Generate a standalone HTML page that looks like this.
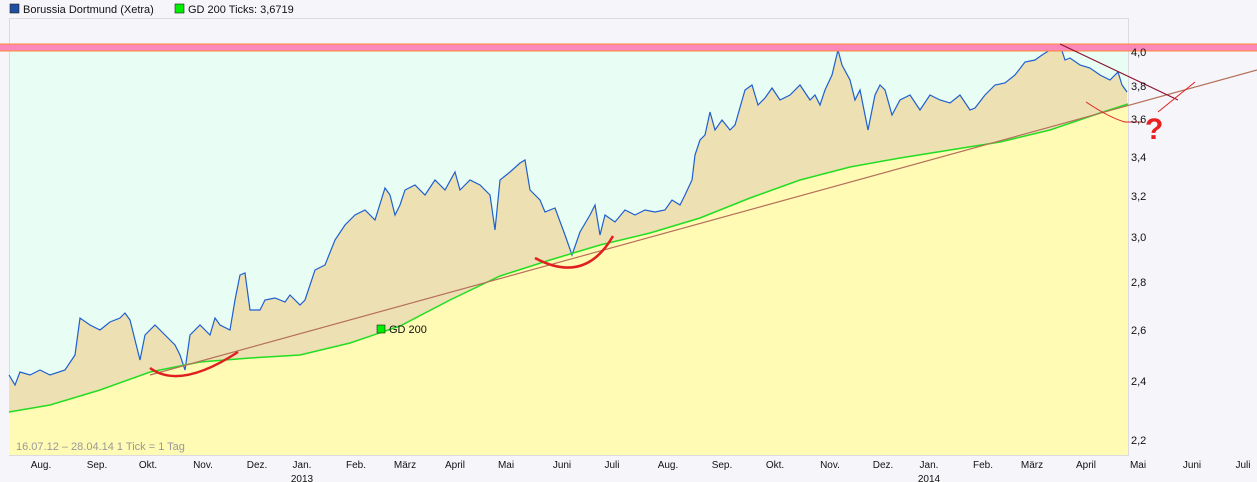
<!DOCTYPE html>
<html><head><meta charset="utf-8"><style>
html,body{margin:0;padding:0;background:#f6f6fa;width:1257px;height:482px;overflow:hidden}
svg{display:block;font-family:"Liberation Sans",sans-serif}
</style></head><body>
<svg width="1257" height="482" viewBox="0 0 1257 482" xmlns="http://www.w3.org/2000/svg">
<rect width="1257" height="482" fill="#f6f6fa"/>
<rect x="10" y="4" width="9" height="9" fill="#1f4fa0" stroke="#222" stroke-width="0.6"/>
<text x="23" y="13" font-size="11" fill="#111">Borussia Dortmund (Xetra)</text>
<rect x="175" y="4" width="9" height="9" fill="#00ee00" stroke="#222" stroke-width="0.6"/>
<text x="188" y="13" font-size="11" fill="#111">GD 200 Ticks: 3,6719</text>
<rect x="9.5" y="18.5" width="1119" height="437" fill="#f6f6fa" stroke="#dcdce0"/>
<rect x="10" y="51" width="1118" height="404" fill="#e8fdf4"/>
<polygon fill="#ede1b4" points="9,455 9,375 15,385 20,372 30,375 40,370 50,375 65,370 75,355 80,318 90,325 100,330 110,322 120,318 125,313 130,320 135,340 140,360 145,335 155,325 165,335 175,345 180,355 185,370 190,335 200,325 210,335 215,318 220,325 230,330 235,300 240,275 245,273 250,310 260,310 265,300 275,298 285,302 290,295 300,305 305,300 315,270 325,265 335,240 345,225 355,215 365,210 375,220 385,188 390,195 395,215 400,205 405,190 415,185 425,195 435,180 445,190 455,172 460,190 470,180 480,185 490,195 495,230 500,180 510,172 520,163 525,160 530,190 540,200 545,212 555,208 565,235 572,255 580,232 590,215 595,205 600,235 605,215 615,222 625,210 635,215 645,210 655,212 665,210 672,200 680,205 685,195 692,180 695,155 700,140 705,135 710,112 715,130 722,120 730,130 735,125 745,90 752,85 758,105 765,98 772,88 780,100 790,95 800,85 810,100 815,95 820,105 825,90 832,75 838,50 842,65 850,80 855,100 860,90 868,130 875,95 880,85 885,90 892,115 900,100 910,95 920,110 930,95 940,100 950,103 960,95 970,110 975,108 985,95 995,85 1005,83 1015,75 1025,62 1035,60 1042,55 1050,50 1060,45 1065,60 1070,58 1080,65 1090,68 1100,75 1110,80 1118,72 1122,85 1127,92 1128,455"/>
<polygon fill="#fffab4" points="9,455 9,412 50,405 100,390 150,372 200,362 250,358 300,355 350,343 400,326 450,300 500,276 550,260 600,245 650,233 700,218 750,198 800,180 850,167 900,158 950,150 1000,142 1050,130 1100,113 1128,104 1128,455"/>
<polyline fill="none" stroke="#1f5fcf" stroke-width="1.2" points="9,375 15,385 20,372 30,375 40,370 50,375 65,370 75,355 80,318 90,325 100,330 110,322 120,318 125,313 130,320 135,340 140,360 145,335 155,325 165,335 175,345 180,355 185,370 190,335 200,325 210,335 215,318 220,325 230,330 235,300 240,275 245,273 250,310 260,310 265,300 275,298 285,302 290,295 300,305 305,300 315,270 325,265 335,240 345,225 355,215 365,210 375,220 385,188 390,195 395,215 400,205 405,190 415,185 425,195 435,180 445,190 455,172 460,190 470,180 480,185 490,195 495,230 500,180 510,172 520,163 525,160 530,190 540,200 545,212 555,208 565,235 572,255 580,232 590,215 595,205 600,235 605,215 615,222 625,210 635,215 645,210 655,212 665,210 672,200 680,205 685,195 692,180 695,155 700,140 705,135 710,112 715,130 722,120 730,130 735,125 745,90 752,85 758,105 765,98 772,88 780,100 790,95 800,85 810,100 815,95 820,105 825,90 832,75 838,50 842,65 850,80 855,100 860,90 868,130 875,95 880,85 885,90 892,115 900,100 910,95 920,110 930,95 940,100 950,103 960,95 970,110 975,108 985,95 995,85 1005,83 1015,75 1025,62 1035,60 1042,55 1050,50 1060,45 1065,60 1070,58 1080,65 1090,68 1100,75 1110,80 1118,72 1122,85 1127,92"/>
<polyline fill="none" stroke="#22dd22" stroke-width="1.5" points="9,412 50,405 100,390 150,372 200,362 250,358 300,355 350,343 400,326 450,300 500,276 550,260 600,245 650,233 700,218 750,198 800,180 850,167 900,158 950,150 1000,142 1050,130 1100,113 1128,104"/>
<line x1="150" y1="375" x2="1257" y2="70" stroke="#b5705a" stroke-width="1.2"/>
<rect x="0" y="44" width="1257" height="7" fill="#ff88bb"/>
<rect x="0" y="43.5" width="1257" height="1" fill="#ff8833"/>
<rect x="0" y="50.5" width="1257" height="1" fill="#ff8833"/>
<line x1="1060" y1="44" x2="1178" y2="100" stroke="#8b1030" stroke-width="1.2"/>
<path d="M150,368 Q180,390 238,352" fill="none" stroke="#e02020" stroke-width="2.5"/>
<path d="M535,258 Q585,285 613,236" fill="none" stroke="#e02020" stroke-width="2.5"/>
<path d="M1086,102 Q1110,118 1125,122 L1143,122" fill="none" stroke="#e02020" stroke-width="1"/>
<line x1="1158" y1="112" x2="1195" y2="82" stroke="#e02020" stroke-width="1"/>
<text x="1145" y="139" font-size="30" font-weight="bold" fill="#e82020">?</text>
<rect x="377" y="325" width="8" height="8" fill="#00ee00" stroke="#222" stroke-width="0.6"/>
<text x="389" y="333" font-size="11" fill="#111">GD 200</text>
<text x="16" y="450" font-size="11" fill="#999">16.07.12 – 28.04.14   1 Tick = 1 Tag</text>
<g font-size="11" fill="#111">
<text x="1131" y="56">4,0</text><text x="1131" y="90">3,8</text><text x="1131" y="123">3,6</text><text x="1131" y="161">3,4</text><text x="1131" y="200">3,2</text><text x="1131" y="241">3,0</text><text x="1131" y="286">2,8</text><text x="1131" y="334">2,6</text><text x="1131" y="385">2,4</text><text x="1131" y="444">2,2</text>
</g>
<g font-size="10" fill="#111" text-anchor="middle">
<text x="41" y="468">Aug.</text><text x="97" y="468">Sep.</text><text x="148" y="468">Okt.</text><text x="203" y="468">Nov.</text><text x="257" y="468">Dez.</text><text x="302" y="468">Jan.</text><text x="302" y="482">2013</text><text x="356" y="468">Feb.</text><text x="405" y="468">März</text><text x="455" y="468">April</text><text x="506" y="468">Mai</text><text x="562" y="468">Juni</text><text x="612" y="468">Juli</text><text x="668" y="468">Aug.</text><text x="722" y="468">Sep.</text><text x="775" y="468">Okt.</text><text x="830" y="468">Nov.</text><text x="883" y="468">Dez.</text><text x="929" y="468">Jan.</text><text x="929" y="482">2014</text><text x="983" y="468">Feb.</text><text x="1032" y="468">März</text><text x="1086" y="468">April</text><text x="1138" y="468">Mai</text><text x="1192" y="468">Juni</text><text x="1243" y="468">Juli</text>
</g>
</svg>
</body></html>
